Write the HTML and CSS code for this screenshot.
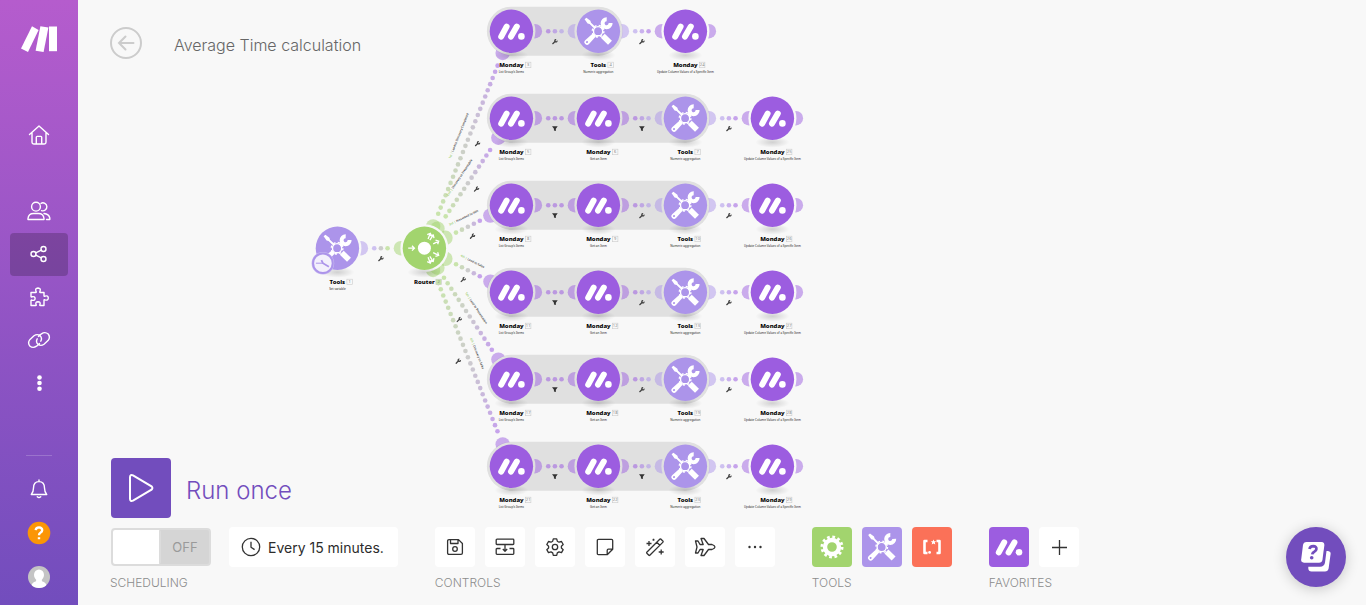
FILE: index.html
```html
<!DOCTYPE html>
<html lang="en">
<head>
    <meta charset="UTF-8">
    <meta name="viewport" content="width=device-width, initial-scale=1.0">
    <title>Average Time calculation</title>
    <link rel="stylesheet" href="styles.css">
</head>
<body>
    <!-- Shared symbols, used by the toolbar and the canvas -->
    <svg class="symbols" aria-hidden="true">
        <symbol id="icon-monday" viewBox="0 0 40 40">
            <path d="M9.8 25.4 15.2 15.400M19.600 25.400 25.400 15.400" fill="none" stroke="#fff" stroke-width="6" stroke-linecap="round"/>
            <circle cx="30" cy="25.200" r="3.300" fill="#fff"/>
        </symbol>
        <symbol id="icon-tools" viewBox="0 0 40 40">
            <path d="M6.2 8 8 6.6 12 9.6 12.6 11.6 17.6 16.4 16.2 17.8 11.2 12.8 9.2 12.2Z" fill="#fff"/>
            <path d="M24.4 24.6 31.6 31.6" stroke="#fff" stroke-width="5.6"/>
            <path d="M28.3 8A4 4 0 1 0 32.2 11.8" fill="none" stroke="#fff" stroke-width="4"/>
            <path d="M26 14.4 22.6 17.4" stroke="#fff" stroke-width="3.4"/>
            <path fill-rule="evenodd" d="M14.6 22 17.6 25 10.6 32.8A2.6 2.6 0 0 1 6.8 29ZM8.6 29.9A1 1 0 1 0 8.7 31.9 1 1 0 0 0 8.6 29.9Z" fill="#fff"/>
            <circle cx="19.7" cy="20" r="4.6" fill="none" stroke="#fff" stroke-width="1.4"/>
            <circle cx="19.7" cy="20" r="5.8" fill="none" stroke="#fff" stroke-width="1.4" stroke-dasharray="2.2 2.35"/>
        </symbol>
        <symbol id="icon-wrench" viewBox="0 0 10 10">
            <path d="M1.5 8.6 5.6 4.5" stroke="#444" stroke-width="2.2" stroke-linecap="round"/>
            <path d="M7.1 1.6A2 2 0 1 0 8.8 3.4" fill="none" stroke="#444" stroke-width="2"/>
        </symbol>
        <symbol id="icon-filter" viewBox="0 0 10 10">
            <path d="M.2 1H9.800L6.600 5.400V9L3.400 8.200V5.400Z" fill="#333"/>
        </symbol>
    </svg>

    <div class="app">
        <aside class="sidebar">
            <a class="logo" href="#" aria-label="Make">
                <svg width="36" height="27" viewBox="0 0 36 27" fill="#fff">
                    <path d="M11 .3 17.6 3.9 7 26 0 22.6Z"/>
                    <path d="M19.4.3 27.4 1.4 22.6 26 14.6 24.7Z"/>
                    <path d="M28 .5H36V25.2H28Z"/>
                </svg>
            </a>
            <nav class="nav">
                <a class="nav-item nav-home" href="#" aria-label="Home">
                    <svg width="22" height="22" viewBox="0 0 22 22"><path d="M1.5 10.6 11 2 20.500 10.600M4 8.600V18.300Q4 20 5.700 20H16.300Q18 20 18 18.300V8.600M8.300 20V13.200Q8.300 12.400 9.100 12.400H12.900Q13.700 12.400 13.700 13.200V20"/></svg>
                </a>
                <a class="nav-item" href="#" aria-label="Team">
                    <svg width="24" height="22" viewBox="0 0 24 22"><circle cx="9" cy="6.700" r="4.400"/><path d="M1 19.500V18.500Q1.500 13.500 6.500 13.500H11.500Q16.500 13.500 17 18.500V19.500ZM14 3.300A4 4 0 1 1 14.500 10.600M17 13.500Q22 14 22.800 18V19.500H19.500"/></svg>
                </a>
                <a class="nav-item active" href="#" aria-label="Scenarios">
                    <svg width="20" height="20" viewBox="0 0 20 20"><circle cx="4.500" cy="10" r="2.500"/><circle cx="14.500" cy="5" r="2.500"/><circle cx="14.500" cy="15" r="2.500"/><path d="M6.700 8.900 12.300 6.100M6.700 11.100 12.300 13.900"/></svg>
                </a>
                <a class="nav-item" href="#" aria-label="Templates">
                    <svg width="22" height="22" viewBox="0 0 22 22"><path d="M3 6.500H7.700Q8.600 6.500 8 5.400Q6.800 2.200 10 2Q13.200 2.200 12 5.400Q11.400 6.500 12.300 6.500H16V9.800Q16 10.700 17 10.200Q20.200 9 20.300 12Q20.200 15 17 13.800Q16 13.300 16 14.200V19.500H12.300Q11.400 19.500 12 18.400Q12.800 15.800 10 15.700Q7.200 15.800 8 18.400Q8.600 19.500 7.700 19.500H3V14.600Q3 13.700 4 14.200Q7 15 7.100 12.500Q7 10 4 10.800Q3 11.300 3 10.400Z"/></svg>
                </a>
                <a class="nav-item" href="#" aria-label="Connections">
                    <svg width="24" height="22" viewBox="0 0 24 22"><path d="M12.500 14.600 9.500 17.200Q6 19.600 2.800 17Q.3 13.600 3 10.400L7 6.800Q10 4.600 12.800 6.500Q15.600 9 13.800 12.200M11.500 7.400 14.500 4.800Q18 2.400 21.200 5Q23.700 8.400 21 11.600L17 15.200Q14 17.400 11.200 15.500Q8.400 13 10.200 9.800"/></svg>
                </a>
                <a class="nav-item" href="#" aria-label="More">
                    <svg width="16" height="18" viewBox="0 0 16 18"><g class="solid"><circle cx="8.500" cy="3.500" r="2.300"/><circle cx="8.500" cy="9" r="2.300"/><circle cx="8.500" cy="14.700" r="2.300"/></g></svg>
                </a>
            </nav>
            <div class="nav-bottom">
                <a class="nav-link" href="#" aria-label="Notifications">
                    <svg width="20" height="20" viewBox="0 0 20 20"><path d="M10 1V2.500M2.300 15.500Q4.500 13 4.500 9Q4.500 2.600 10 2.600Q15.500 2.600 15.500 9Q15.500 13 17.700 15.500ZM8.300 17.700Q10 19.200 11.700 17.700"/></svg>
                </a>
                <a class="nav-link" href="#" aria-label="Help">
                    <svg width="24" height="24" viewBox="0 0 24 24"><circle cx="12" cy="12" r="11.300" class="help-disc"/><path class="help-mark" d="M8.700 9.200Q8.900 6.400 12 6.400Q15.200 6.600 15.200 9.200Q15.200 10.700 13.400 11.700Q12 12.500 12 14.200M12 16.300V18.200"/></svg>
                </a>
                <a class="nav-link" href="#" aria-label="Profile">
                    <svg width="22" height="22" viewBox="0 0 22 22"><clipPath id="avatar"><circle cx="11" cy="11" r="11"/></clipPath><g class="solid" clip-path="url(#avatar)"><path class="avatar-bg" d="M0 0H22V22H0Z"/><ellipse cx="11" cy="9" rx="5" ry="5.500"/><path d="M3 21Q4 16 8 15.200L8.500 12H13.500L14 15.200Q18 16 19 21L15 24H7Z"/></g></svg>
                </a>
            </div>
        </aside>

        <main class="editor">
            <svg class="canvas" id="canvas" aria-label="Scenario"></svg>

            <header class="editor-header">
                <button class="back-btn" aria-label="Back">
                    <svg width="18" height="18" viewBox="0 0 18 18"><path d="M16.500 9H2M8.500 2.500 2 9 8.500 15.500"/></svg>
                </button>
                <h1>Average Time calculation</h1>
            </header>

            <footer class="editor-footer">
                <button class="run-once">
                    <span class="run-icon"><svg width="26" height="30" viewBox="0 0 26 30"><path d="M2 4V26Q2.300 29 5 27.700L23.500 16.700Q25.300 15 23.500 13.300L5 2.300Q2.300 1 2 4Z"/></svg></span>
                    <span class="run-text">Run once</span>
                </button>
                <div class="toolbar">
                    <section class="group">
                        <div class="group-items scheduling">
                            <label class="switch"><input type="checkbox"><span>OFF</span></label>
                            <button class="interval">
                                <svg width="20" height="20" viewBox="0 0 20 20"><circle cx="10" cy="10" r="8.700"/><path d="M10 4.800V10.200L13.600 12.600"/></svg>
                                Every 15 minutes.
                            </button>
                        </div>
                        <h2>SCHEDULING</h2>
                    </section>
                    <section class="group">
                        <div class="group-items">
                            <button class="tile" aria-label="Save"><svg width="20" height="20" viewBox="0 0 20 20"><path d="M4 2.600H13.500L17.400 6.500V16Q17.400 17.400 16 17.400H4Q2.600 17.400 2.600 16V4Q2.600 2.600 4 2.600ZM5.500 2.600V6.500H13V2.600"/><circle cx="10" cy="12" r="2.300"/></svg></button>
                            <button class="tile" aria-label="Align"><svg width="20" height="20" viewBox="0 0 20 20"><path d="M2 2.200H18Q18.800 2.200 18.800 3V6.700Q18.800 7.500 18 7.500H2Q1.200 7.500 1.200 6.700V3Q1.200 2.200 2 2.200ZM5.500 11.500H2Q1.200 11.500 1.200 12.300V16.500Q1.200 17.300 2 17.300H18Q18.800 17.300 18.800 16.500V12.300Q18.800 11.500 18 11.500H14.500M10 8V14M7.800 12 10 14.200 12.200 12"/></svg></button>
                            <button class="tile" aria-label="Settings"><svg width="20" height="20" viewBox="0 0 20 20"><path d="M8.300 1.800H11.700L12.300 4.200L14 5.200L16.500 4.500L18.200 7.500L16.400 9.200V11L18.200 12.700L16.500 15.600L14 14.900L12.300 15.900L11.700 18.300H8.300L7.700 15.900L6 14.900L3.500 15.600L1.800 12.700L3.600 11V9.200L1.800 7.500L3.500 4.500L6 5.200L7.700 4.200Z"/><circle cx="10" cy="10" r="2.700"/></svg></button>
                            <button class="tile" aria-label="Notes"><svg width="20" height="20" viewBox="0 0 20 20"><path d="M3.500 2.300H16.500Q17.700 2.300 17.700 3.500V12.200L12.200 17.700H3.500Q2.300 17.700 2.300 16.500V3.500Q2.300 2.300 3.500 2.300ZM17.700 12.200H13.400Q12.200 12.200 12.200 13.400V17.700"/></svg></button>
                            <button class="tile" aria-label="Auto-align"><svg width="20" height="20" viewBox="0 0 20 20"><path d="M15.800 2 18 4.200Q18.300 4.700 18 5.100L4.800 18.300Q4.300 18.700 3.900 18.300L1.800 16.200Q1.400 15.700 1.800 15.200L15 2Q15.400 1.700 15.800 2ZM11.800 5.200 14.800 8.200M4 4V9M1.500 6.500H6.500M16.200 12.500V17.500M13.700 15H18.700M8.500 1.800V3.800M7.500 2.800H9.500"/></svg></button>
                            <button class="tile" aria-label="Explain flow"><svg width="22" height="20" viewBox="0 0 22 20"><path d="M1.500 4H4L6 7.500H9.200L7 1.500H10L14.500 7.500H18Q20.800 8.500 21 10Q20.800 11.500 18 12.500H14.500L10 18.500H7L9.200 12.500H6L4 16H1.500L3 10Z"/></svg></button>
                            <button class="tile" aria-label="More controls"><svg width="20" height="20" viewBox="0 0 20 20"><g class="dots"><circle cx="4.500" cy="10" r="1.200"/><circle cx="10" cy="10" r="1.200"/><circle cx="15.500" cy="10" r="1.200"/></g></svg></button>
                        </div>
                        <h2>CONTROLS</h2>
                    </section>
                    <section class="group">
                        <div class="group-items">
                            <button class="tile tile-green" aria-label="Flow control"><svg width="40" height="40" viewBox="0 0 40 40"><circle cx="20" cy="20" r="7" fill="none" stroke="#fff" stroke-width="4.400"/><circle cx="20" cy="20" r="10" fill="none" stroke="#fff" stroke-width="3" stroke-dasharray="2.700 2.536"/></svg></button>
                            <button class="tile tile-lilac" aria-label="Tools"><svg width="40" height="40"><use href="#icon-tools"/></svg></button>
                            <button class="tile tile-red" aria-label="Text parser"><svg width="40" height="40" viewBox="0 0 40 40"><path d="M15.500 14H12.500V26H15.500M24.500 14H27.500V26H24.500" fill="none" stroke="#fff" stroke-width="2.600" stroke-linejoin="round"/><circle cx="17.600" cy="25.400" r="1.400" fill="#fff"/><path d="M21.500 12.500 22.300 14.200 24.200 14.300 22.800 15.600 23.300 17.500 21.500 16.500 19.700 17.500 20.200 15.600 18.800 14.300 20.700 14.200Z" fill="#fff"/></svg></button>
                        </div>
                        <h2>TOOLS</h2>
                    </section>
                    <section class="group">
                        <div class="group-items">
                            <button class="tile tile-purple" aria-label="Monday"><svg width="40" height="40"><use href="#icon-monday"/></svg></button>
                            <button class="tile" aria-label="Add favorite"><svg width="20" height="20" viewBox="0 0 20 20"><path d="M10.500 3V18M3 10.500H18"/></svg></button>
                        </div>
                        <h2>FAVORITES</h2>
                    </section>
                </div>
            </footer>

            <button class="chat-btn" aria-label="Support">
                <svg width="32" height="32" viewBox="0 0 32 32">
                    <path d="M26.500 10H28Q31 10.500 30.600 13L28.600 27.500Q28 30.500 25 30.500H11.500Q8.500 30.500 8.300 27.500V25.800H20Q24.500 25.500 25 21.500Z" fill="#fff"/>
                    <path d="M6.500 1H21.500Q24.700 1.300 24.300 4.500L22.500 18.500Q22 21.700 19 21.700H4Q.8 21.500 1.200 18.300L3 4Q3.500 1.200 6.500 1Z" fill="#fff"/>
                    <path d="M9.500 8Q10 5.200 13.300 5.200Q16.600 5.400 16.400 8Q16.200 9.800 14.300 10.700Q12.500 11.500 12.200 13.400" fill="none" stroke="#724dbd" stroke-width="2.700"/>
                    <circle cx="11.700" cy="16.800" r="1.800" fill="#724dbd"/>
                </svg>
            </button>
        </main>
    </div>

    <script src="script.js"></script>
</body>
</html>
```

FILE: styles.css
```css
* {
    box-sizing: border-box;
}

body {
    margin: 0;
    font-family: Inter, "Liberation Sans", sans-serif;
    background: #f8f8f8;
    color: #2c2c2c;
}

button {
    font: inherit;
    color: inherit;
    border: none;
    padding: 0;
    background: none;
    cursor: pointer;
}

.symbols {
    position: absolute;
    width: 0;
    height: 0;
}

.app {
    display: flex;
    height: 100vh;
}

/* Sidebar */
.sidebar {
    flex: 0 0 78px;
    display: flex;
    flex-direction: column;
    padding: 26px 10px 6px;
    background: linear-gradient(#b55ccd, #724dbd);
}

.sidebar svg {
    display: block;
    fill: none;
    stroke: #fff;
    stroke-width: 1.4;
    stroke-linejoin: round;
    stroke-linecap: round;
}

.sidebar .logo svg {
    fill: #fff;
    stroke: none;
}

.sidebar .solid {
    fill: #fff;
    stroke: none;
}

.logo {
    align-self: center;
}

.nav {
    margin-top: 61px;
}

.nav-item,
.nav-link {
    display: flex;
    align-items: center;
    justify-content: center;
    height: 43px;
    padding-bottom: 1px;
    border-radius: 4px;
}

.nav-link {
    height: 44px;
    padding-bottom: 0;
}

.nav-home {
    margin-bottom: 33px;
}

.nav-item.active {
    background: rgba(0, 0, 0, 0.2);
}

.nav-bottom {
    margin-top: auto;
}

.nav-bottom::before {
    content: "";
    display: block;
    width: 26px;
    height: 1px;
    margin: 0 auto 11px;
    background: rgba(255, 255, 255, 0.2);
}

.help-disc {
    fill: #fb9606;
    stroke: none;
}

.help-mark {
    stroke-width: 2.4;
    stroke-linecap: butt;
}

.avatar-bg {
    fill: #c4c4c4;
}

/* Editor */
.editor {
    position: relative;
    flex: 1;
    display: flex;
    flex-direction: column;
    justify-content: space-between;
    padding: 27px 32px 14px;
}

.canvas {
    position: absolute;
    top: 0;
    left: 0;
    width: 100%;
    height: 100%;
}

.editor-header,
.editor-footer {
    position: relative;
}

.editor-header {
    display: flex;
    align-items: center;
    gap: 32px;
}

.back-btn {
    display: flex;
    align-items: center;
    justify-content: center;
    width: 32px;
    height: 32px;
    border: 2px solid #ccc;
    border-radius: 50%;
}

.back-btn svg {
    fill: none;
    stroke: #ccc;
    stroke-width: 2;
    stroke-linecap: round;
}

.editor-header h1 {
    margin: 4px 0 0;
    font-size: 16px;
    line-height: 20px;
    font-weight: 300;
    color: #666;
}

.run-once {
    display: flex;
    align-items: center;
    gap: 15px;
    margin: 0 0 9px 1px;
    color: #724dbd;
}

.run-icon {
    display: flex;
    align-items: center;
    justify-content: center;
    width: 60px;
    height: 60px;
    border-radius: 4px;
    background: #724dbd;
}

.run-icon svg {
    fill: none;
    stroke: #fff;
    stroke-width: 2;
}

.run-text {
    padding-top: 6px;
    font-size: 24px;
    line-height: 32px;
    font-weight: 300;
}

.toolbar {
    display: flex;
    gap: 37px;
}

.group-items {
    display: flex;
    align-items: center;
    gap: 10px;
}

.scheduling {
    gap: 18px;
    padding-left: 1px;
}

.group h2 {
    margin: 8px 0 0;
    font-size: 12px;
    line-height: 16px;
    font-weight: 300;
    color: #8c8c8c;
}

.switch {
    display: flex;
    align-items: center;
    width: 100px;
    height: 38px;
    border: 2px solid #dcdcdc;
    border-radius: 4px;
    background: #d5d5d5;
    font-size: 13px;
    color: #9a9a9a;
    cursor: pointer;
}

.switch input {
    appearance: none;
    width: 48px;
    height: 34px;
    margin: 0;
    border-right: 2px solid #dcdcdc;
    border-radius: 2px;
    background: #fff;
}

.switch span {
    flex: 1;
    text-align: center;
}

.interval {
    display: flex;
    align-items: center;
    gap: 7px;
    height: 40px;
    padding: 0 14px 0 12px;
    border-radius: 4px;
    background: #fff;
    font-size: 14px;
    white-space: nowrap;
}

.interval svg,
.tile svg {
    fill: none;
    stroke: #333;
    stroke-width: 1.3;
    stroke-linejoin: round;
}

.tile {
    display: flex;
    align-items: center;
    justify-content: center;
    width: 40px;
    height: 40px;
    border-radius: 4px;
    background: #fff;
}

.tile .dots {
    fill: #333;
    stroke: none;
}

.tile-green svg,
.tile-lilac svg,
.tile-red svg,
.tile-purple svg {
    stroke: none;
}

.tile-green {
    background: #a2d46e;
}

.tile-lilac {
    background: #ac94ea;
}

.tile-red {
    background: #fb7158;
}

.tile-purple {
    background: #9c5de0;
}

.chat-btn {
    position: absolute;
    right: 20px;
    bottom: 18px;
    display: flex;
    align-items: center;
    justify-content: center;
    width: 60px;
    height: 60px;
    border-radius: 50%;
    background: #724dbd;
    box-shadow: 0 2px 14px rgba(0, 0, 0, 0.2);
}

/* Canvas */
.canvas text {
    font-family: "Noto Sans", sans-serif;
    text-anchor: middle;
}

.canvas .node-name {
    font-size: 6px;
    font-weight: 800;
    fill: #000;
}

.node-action {
    font-size: 3px;
    fill: #222;
}

.node-number {
    font-size: 4px;
    fill: #888;
}

.route-label {
    font-size: 3px;
    fill: #000;
}

.route-label .order {
    fill: #7cc23c;
}
```

FILE: script.js
```js
const STEP = 87;
const CANVAS_BG = '#f8f8f8';
const GROUP_BG = '#e0e0e0';
const COLORS = { monday: '#9c5de0', tools: '#ac94ea', router: '#a2d46e' };
const NAMES = { monday: 'Monday', tools: 'Tools', router: 'Router' };

const LIST = "List Group's Items";
const GET = 'Get an Item';
const SUM = 'Numeric aggregation';
const UPDATE = 'Update Column Values of a Specific Item';

// One entry per router output, the last module sits outside the aggregation
const routes = [
    { order: '1st', label: 'Lead to Discovery Completed', numbers: [3, 4, 24], links: ['wrench', 'wrench'] },
    { order: '2nd', label: 'Discovery to Presentable', numbers: [5, 6, 7, 25], links: ['filter', 'filter', 'wrench'] },
    { order: '3rd', label: 'Presented to Win', numbers: [8, 9, 10, 26], links: ['filter', 'wrench', 'wrench'] },
    { order: '4th', label: 'Lead to Sales', numbers: [11, 12, 13, 27], links: ['filter', 'wrench', 'wrench'] },
    { order: '5th', label: 'Lead to Presentation', numbers: [17, 18, 19, 28], links: ['filter', 'wrench', 'wrench'] },
    { order: '6th', label: 'Discovery to Sales', numbers: [21, 22, 23, 29], links: ['filter', 'filter', 'wrench'] }
];

const start = { type: 'tools', x: 259, y: 248, number: 1, action: 'Set variable', bg: CANVAS_BG };
const router = { type: 'router', x: 346, y: 248, number: 2, action: '', bg: CANVAS_BG };

function mix(a, b, t) {
    const parse = c => [1, 3, 5].map(i => parseInt(c.substr(i, 2), 16));
    const from = parse(a);
    const to = parse(b);
    return `rgb(${from.map((v, i) => Math.round(v + (to[i] - v) * t)).join(',')})`;
}

function dotColor(from, to, t) {
    if (from !== 'router' && to !== 'router') {
        return mix(COLORS[from], COLORS[to], t);
    }
    const grey = '#a8a8a8';
    return t < 0.5 ? mix(COLORS[from], grey, t * 2) : mix(grey, COLORS[to], t * 2 - 1);
}

function cap(node, dx, dy) {
    return `<circle cx="${node.x + dx * 23.5}" cy="${node.y + dy * 23.5}" r="7.2" fill="${COLORS[node.type]}" opacity="0.5"/>`;
}

// Dotted line with its half-round sockets and the icon beside it
function drawLink(a, b, icon, route) {
    const length = Math.hypot(b.x - a.x, b.y - a.y);
    const dx = (b.x - a.x) / length;
    const dy = (b.y - a.y) / length;
    const midX = (a.x + b.x) / 2;
    const midY = (a.y + b.y) / 2;
    const count = Math.round((length - 73.6) / 6.65);
    let out = cap(a, dx, dy) + cap(b, -dx, -dy);

    for (let i = 0; i <= count; i++) {
        const d = (i - count / 2) * 6.65;
        out += `<circle cx="${midX + dx * d}" cy="${midY + dy * d}" r="2.3" fill="${dotColor(a.type, b.type, i / count)}" opacity="0.55"/>`;
    }
    out += `<use href="#icon-${icon}" x="${midX - dy * 10.4 - 3}" y="${midY + dx * 10.4 - 3}" width="6" height="6"/>`;

    if (route) {
        const angle = Math.atan2(dy, dx) * 180 / Math.PI;
        out += `<text class="route-label" transform="translate(${midX + dy * 9} ${midY - dx * 9}) rotate(${angle})">` +
            `<tspan class="order">${route.order} |</tspan> ${route.label}</text>`;
    }
    return out;
}

function drawRouterIcon() {
    const arrow = 'M-3.200 0H3M.6-2.400 3 0 .6 2.400';
    let out = `<circle cx="${router.x}" cy="${router.y}" r="6.5" fill="#fff"/>`;
    out += `<path transform="translate(${router.x - 13} ${router.y})" d="${arrow}" fill="none" stroke="#fff" stroke-width="1.3"/>`;
    routes.forEach((route, row) => {
        const angle = Math.atan2(31 + row * STEP - router.y, STEP) * 180 / Math.PI;
        out += `<path transform="translate(${router.x} ${router.y}) rotate(${angle}) translate(13 0)" d="${arrow}" fill="none" stroke="#fff" stroke-width="1.3"/>`;
    });
    return out;
}

function drawNode(node) {
    const { x, y, type } = node;
    const badgeX = x + (type === 'tools' ? 9.5 : type === 'router' ? 11.5 : 14);
    let out = `<ellipse cx="${x}" cy="${y + 24}" rx="17" ry="5.5" fill="url(#shadow)"/>`;
    out += `<circle cx="${x}" cy="${y}" r="21.7" fill="${COLORS[type]}"/>`;
    out += type === 'router' ? drawRouterIcon() : `<use href="#icon-${type}" x="${x - 20}" y="${y - 20}" width="40" height="40"/>`;
    out += `<text class="node-name" x="${x}" y="${y + 36}">${NAMES[type]}</text>`;
    out += `<rect x="${badgeX}" y="${y + 31}" width="5.5" height="5.5" fill="${type === 'router' ? '#c4e3a6' : '#f8f8f8'}" stroke="#ccc" stroke-width="0.6"/>`;
    out += `<text class="node-number" x="${badgeX + 2.75}" y="${y + 35.2}">${node.number}</text>`;
    out += `<text class="node-action" x="${x}" y="${y + 41.5}">${node.action}</text>`;
    return out;
}

function drawClock(x, y) {
    return `<circle cx="${x}" cy="${y}" r="11.3" fill="#c9bcf1"/>` +
        `<circle cx="${x}" cy="${y}" r="9.8" fill="#f3f0fc" stroke="#ac94ea" stroke-width="2"/>` +
        `<path d="M${x - 7} ${y}H${x}" fill="none" stroke="#ac94ea"/>` +
        `<path d="M${x - 1.5} ${y - 3}L${x} ${y}L${x + 6} ${y + 3.5}" fill="none" stroke="#ac94ea" stroke-width="1.8"/>`;
}

let groups = '';
let links = drawLink(start, router, 'wrench');
let rings = '';
const nodes = [start, router];

routes.forEach((route, row) => {
    const y = 31 + row * STEP;
    const last = route.numbers.length - 1;
    const types = last === 2 ? ['monday', 'tools', 'monday'] : ['monday', 'monday', 'tools', 'monday'];
    const actions = last === 2 ? [LIST, SUM, UPDATE] : [LIST, GET, SUM, UPDATE];
    const modules = types.map((type, i) => ({
        type, x: 433 + i * STEP, y, number: route.numbers[i], action: actions[i], bg: i < last ? GROUP_BG : CANVAS_BG
    }));

    groups += `<rect x="408.5" y="${y - 24.5}" width="${(last - 1) * STEP + 49}" height="49" rx="24.5" fill="${GROUP_BG}"/>`;
    links += drawLink(router, modules[0], 'wrench', route);
    route.links.forEach((icon, i) => {
        links += drawLink(modules[i], modules[i + 1], icon);
    });
    links += cap(modules[last], 1, 0);
    nodes.push(...modules);
});

nodes.forEach(node => {
    rings += `<circle cx="${node.x}" cy="${node.y}" r="24" fill="${node.bg}"/>`;
});

document.getElementById('canvas').innerHTML =
    '<defs><radialGradient id="shadow"><stop offset="0" stop-color="#000" stop-opacity="0.16"/>' +
    '<stop offset="1" stop-color="#000" stop-opacity="0"/></radialGradient></defs>' +
    '<g transform="translate(0.4 0.2)">' +
    groups + links + rings + nodes.map(drawNode).join('') + drawClock(start.x - 14.5, start.y + 15) +
    '</g>';
```
